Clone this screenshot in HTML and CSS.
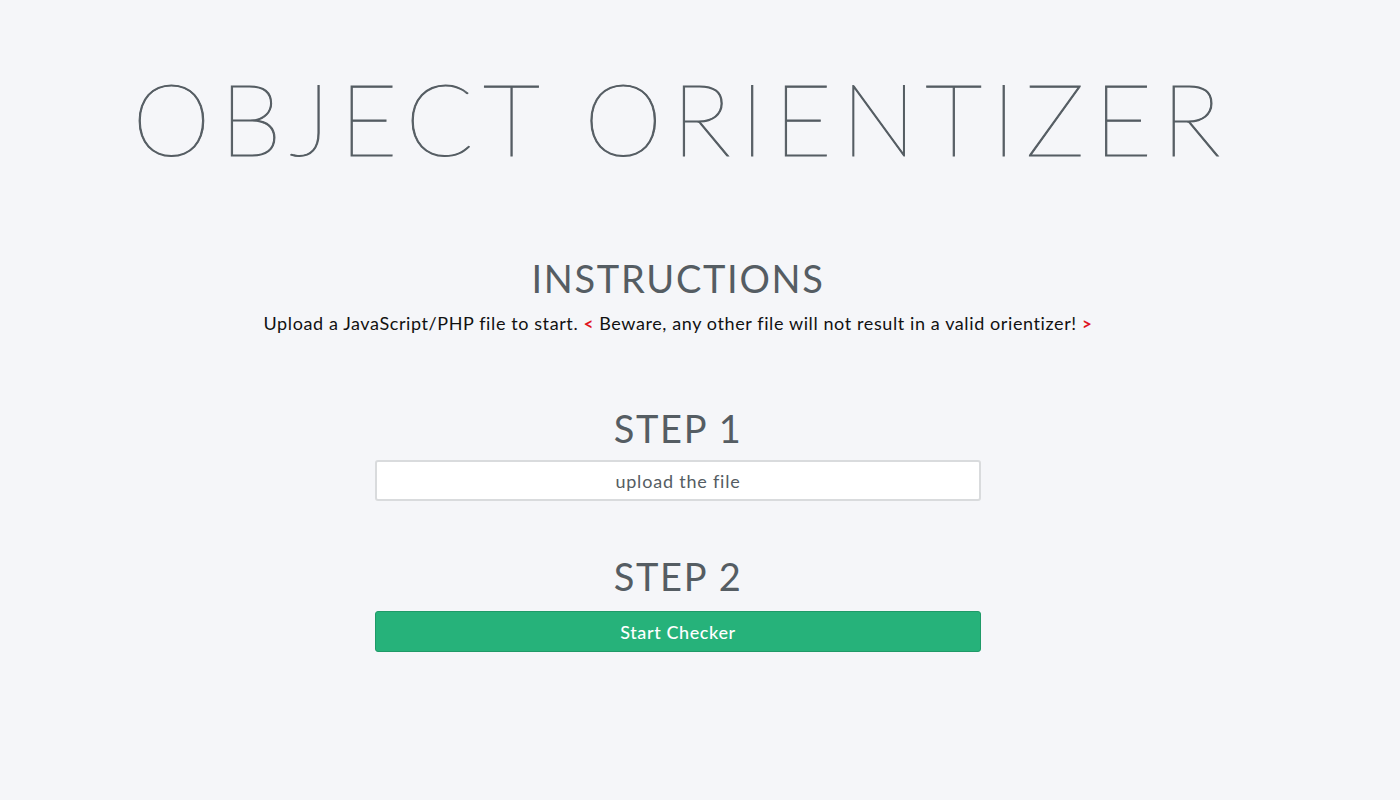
FILE: index.html
```html
<!DOCTYPE html>
<html lang="en">
<head>
<meta charset="utf-8">
<title>Object Orientizer</title>
<link rel="stylesheet" href="styles.css">
</head>
<body>
<main class="page">
  <h1 class="title">OBJECT ORIENTIZER</h1>
  <section class="instructions">
    <h2 class="heading">INSTRUCTIONS</h2>
    <p class="lead">Upload a JavaScript/PHP file to start. <span class="warn">&lt;</span> Beware, any other file will not result in a valid orientizer! <span class="warn">&gt;</span></p>
  </section>
  <section class="step step-one">
    <h2 class="heading step-title">STEP 1</h2>
    <div class="field">upload the file</div>
  </section>
  <section class="step step-two">
    <h2 class="heading step-title">STEP 2</h2>
    <button class="btn" type="button">Start Checker</button>
  </section>
</main>
</body>
</html>
```
FILE: styles.css
```css
html, body {
  margin: 0;
  padding: 0;
  background: #f5f6f9;
}
body {
  font-family: "Lato", "Open Sans", sans-serif;
  color: #555d63;
}
.page {
  width: 1356px;
  display: flex;
  flex-direction: column;
  align-items: center;
}
.title {
  margin: 62px 0 0;
  padding-left: 6px;
  font-size: 100px;
  font-weight: 100;
  line-height: 110px;
  letter-spacing: 9.3px;
  color: #555d63;
  -webkit-text-stroke: 1px #555d63;
}
.instructions {
  margin-top: 83px;
  display: flex;
  flex-direction: column;
  align-items: center;
}
.heading {
  margin: 0;
  font-size: 38px;
  font-weight: 400;
  line-height: 46px;
  letter-spacing: 1.7px;
  color: #555d63;
}
.lead {
  margin: 10px 0 0;
  font-size: 18px;
  line-height: 24px;
  color: #111;
  letter-spacing: 0.6px;
}
.warn {
  color: #e0141e;
  font-weight: 700;
  font-size: 17px;
}
.step {
  display: flex;
  flex-direction: column;
  align-items: center;
}
.step-one {
  margin-top: 69px;
}
.step-two {
  margin-top: 52px;
}
.step-title {
  margin-bottom: 9px;
}
.field {
  box-sizing: border-box;
  width: 606px;
  height: 41px;
  background: #fff;
  border: 2px solid #d9dbdd;
  border-radius: 3px;
  display: flex;
  align-items: center;
  justify-content: center;
  font-size: 18px;
  letter-spacing: 0.8px;
  color: #555d63;
}
.btn {
  box-sizing: border-box;
  width: 606px;
  height: 41px;
  margin-top: 3px;
  background: #26b27a;
  border: 1px solid #1f9a68;
  border-radius: 3px;
  color: #fff;
  font-family: "Lato", "Open Sans", sans-serif;
  font-size: 18px;
  font-weight: 500;
  letter-spacing: 0.6px;
  cursor: pointer;
}
```
